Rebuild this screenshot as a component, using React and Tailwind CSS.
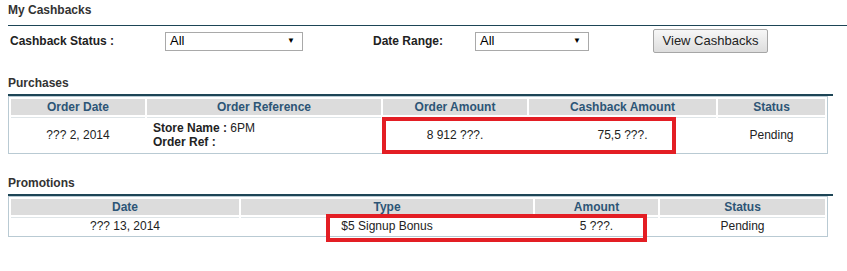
import React from "react";

function Select({ w }) {
  return (
    <div
      className={`${w} h-[19px] border border-[#a9a9a9] bg-white flex items-center justify-between pl-[4px] pr-[7px] text-[13px] text-black leading-[17px]`}
    >
      <span className="-mt-[2px]">All</span>
      <span className="text-[8px] leading-none">▼</span>
    </div>
  );
}

const thCls =
  "p-0 h-[16px] bg-[#dcdcdc] text-[#2d5576] font-bold text-[12px] leading-[16px] text-center";
const tdCls = "p-0 border-t border-[#dfe5e8] leading-[14px]";

export default function App() {
  return (
    <div className="w-[847px] h-[271px] bg-white font-['Liberation_Sans',Arial,sans-serif] text-[12px] text-[#222] overflow-hidden">
      <div className="pl-[8px] pt-[3px] h-[25px] font-bold text-[#333] leading-[14px]">
        My Cashbacks
      </div>
      <div className="ml-[8px] h-px bg-[#1d4556]" />

      <div className="flex items-center pt-[2px] h-[26px] box-content">
        <div className="ml-[10px] w-[155px] font-bold leading-[14px]">Cashback Status :</div>
        <Select w="w-[138px]" />
        <div className="ml-[70px] w-[102px] font-bold leading-[14px]">Date Range:</div>
        <Select w="w-[114px]" />
        <button className="ml-[64px] w-[115px] h-[24px] border border-[#a6a6a6] rounded-[2px] bg-gradient-to-b from-[#f7f7f7] to-[#dddddd] text-[13px] text-[#222] leading-[22px]">
          View Cashbacks
        </button>
      </div>

      <div className="pl-[8px] pt-[22px] pb-[4px] font-bold text-[#333] leading-[14px]">
        Purchases
      </div>
      <div className="ml-[8px] w-[825px] h-[2px] bg-[#1d4556]" />

      <div className="relative ml-[8px] w-[820px]">
        <table className="w-[820px] table-fixed border-separate border-spacing-[2px] border border-[#b9cad3]">
          <thead>
            <tr>
              <th className={`${thCls} w-[134px]`}>Order Date</th>
              <th className={`${thCls} w-[234px]`}>Order Reference</th>
              <th className={`${thCls} w-[144px]`}>Order Amount</th>
              <th className={`${thCls} w-[187px]`}>Cashback Amount</th>
              <th className={`${thCls} w-[107px]`}>Status</th>
            </tr>
          </thead>
          <tbody>
            <tr className="h-[34px]">
              <td className={`${tdCls} text-center`}>??? 2, 2014</td>
              <td className={`${tdCls} pl-[6px]`}>
                <div>
                  <span className="font-bold">Store Name :</span> 6PM
                </div>
                <div>
                  <span className="font-bold">Order Ref :</span>
                </div>
              </td>
              <td className={`${tdCls} text-center`}>8 912 ???.</td>
              <td className={`${tdCls} text-center`}>75,5 ???.</td>
              <td className={`${tdCls} text-center`}>Pending</td>
            </tr>
          </tbody>
        </table>
        <div className="absolute top-[21px] left-[374px] w-[294px] h-[37px] border-[4px] border-[#e31e24]" />
      </div>

      <div className="pl-[8px] pt-[22px] pb-[4px] font-bold text-[#333] leading-[14px]">
        Promotions
      </div>
      <div className="ml-[8px] w-[825px] h-[2px] bg-[#1d4556]" />

      <div className="relative ml-[8px] w-[820px]">
        <table className="w-[820px] table-fixed border-separate border-spacing-[2px] border border-[#b9cad3]">
          <thead>
            <tr>
              <th className={`${thCls} w-[228px]`}>Date</th>
              <th className={`${thCls} w-[292px]`}>Type</th>
              <th className={`${thCls} w-[123px]`}>Amount</th>
              <th className={`${thCls} w-[165px]`}>Status</th>
            </tr>
          </thead>
          <tbody>
            <tr className="h-[17px]">
              <td className={`${tdCls} text-center`}>??? 13, 2014</td>
              <td className={`${tdCls} text-center`}>$5 Signup Bonus</td>
              <td className={`${tdCls} text-center`}>5 ???.</td>
              <td className={`${tdCls} text-center`}>Pending</td>
            </tr>
          </tbody>
        </table>
        <div className="absolute top-[18px] left-[318px] w-[321px] h-[28px] border-[4px] border-[#e31e24]" />
      </div>
    </div>
  );
}
